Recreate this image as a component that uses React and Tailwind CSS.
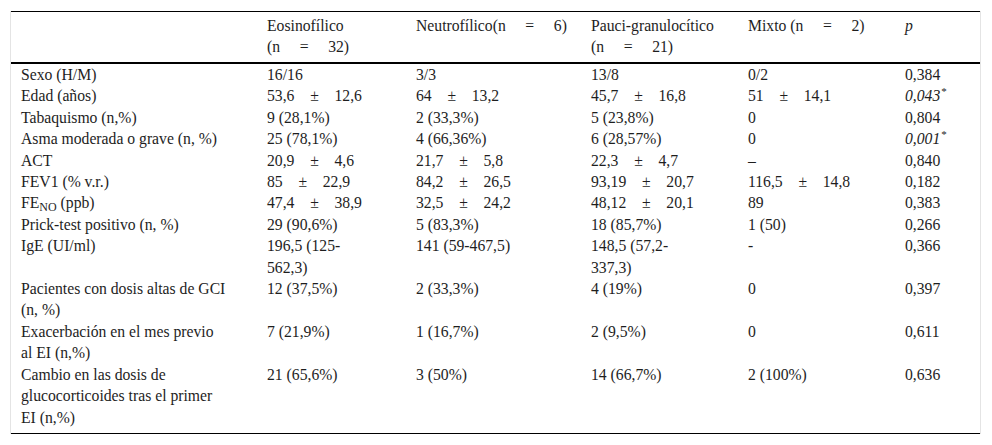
import React from "react";

const PM = ({ a, b }) => (
  <span>
    {a}
    {"\u00a0\u00a0\u00a0\u00a0±\u00a0\u00a0\u00a0\u00a0"}
    {b}
  </span>
);

const Star = ({ v }) => (
  <span>
    <i>{v}</i>
    <sup className="text-[11px] relative -top-[6px] ml-[1px]">*</sup>
  </span>
);

const rows = [
  ["Sexo (H/M)", "16/16", "3/3", "13/8", "0/2", "0,384"],
  [
    "Edad (años)",
    <PM a="53,6" b="12,6" />,
    <PM a="64" b="13,2" />,
    <PM a="45,7" b="16,8" />,
    <PM a="51" b="14,1" />,
    <Star v="0,043" />,
  ],
  ["Tabaquismo (n,%)", "9 (28,1%)", "2 (33,3%)", "5 (23,8%)", "0", "0,804"],
  ["Asma moderada o grave (n, %)", "25 (78,1%)", "4 (66,36%)", "6 (28,57%)", "0", <Star v="0,001" />],
  ["ACT", <PM a="20,9" b="4,6" />, <PM a="21,7" b="5,8" />, <PM a="22,3" b="4,7" />, "–", "0,840"],
  [
    "FEV1 (% v.r.)",
    <PM a="85" b="22,9" />,
    <PM a="84,2" b="26,5" />,
    <PM a="93,19" b="20,7" />,
    <PM a="116,5" b="14,8" />,
    "0,182",
  ],
  [
    <span>
      FE<sub className="text-[12px] relative top-[3px] align-baseline">NO</sub> (ppb)
    </span>,
    <PM a="47,4" b="38,9" />,
    <PM a="32,5" b="24,2" />,
    <PM a="48,12" b="20,1" />,
    "89",
    "0,383",
  ],
  ["Prick-test positivo (n, %)", "29 (90,6%)", "5 (83,3%)", "18 (85,7%)", "1 (50)", "0,266"],
  [
    "IgE (UI/ml)",
    <span>196,5 (125-<br />562,3)</span>,
    "141 (59-467,5)",
    <span>148,5 (57,2-<br />337,3)</span>,
    "-",
    "0,366",
  ],
  [<span>Pacientes con dosis altas de GCI<br />(n, %)</span>, "12 (37,5%)", "2 (33,3%)", "4 (19%)", "0", "0,397"],
  [<span>Exacerbación en el mes previo<br />al EI (n,%)</span>, "7 (21,9%)", "1 (16,7%)", "2 (9,5%)", "0", "0,611"],
  [
    <span>Cambio en las dosis de<br />glucocorticoides tras el primer<br />EI (n,%)</span>,
    "21 (65,6%)",
    "3 (50%)",
    "14 (66,7%)",
    "2 (100%)",
    "0,636",
  ],
];

export default function App() {
  return (
    <div className="bg-white w-[992px] h-[445px] pt-[11px] pl-[10px]" style={{ fontFamily: '"Liberation Serif", "Times New Roman", serif' }}>
      <div className="w-[971px] border-x border-[#e4e4e4]">
        <table className="w-full table-fixed border-collapse text-[15.7px] leading-[21.4px] text-[#1e1e1e]">
          <colgroup>
            <col className="w-[246px]" />
            <col className="w-[149px]" />
            <col className="w-[175px]" />
            <col className="w-[157px]" />
            <col className="w-[157px]" />
            <col />
          </colgroup>
          <thead>
            <tr className="border-t border-b-2 border-black align-top text-left">
              <th className="font-normal pl-[10px] pt-[3px] pb-[5px]"></th>
              <th className="font-normal pl-[10px] pt-[3px] pb-[5px] leading-[21px]">
                Eosinofílico
                <br />
                {"(n\u00a0\u00a0\u00a0\u00a0\u00a0=\u00a0\u00a0\u00a0\u00a0\u00a032)"}
              </th>
              <th className="font-normal pl-[10px] pt-[3px] pb-[5px] whitespace-nowrap">
                {"Neutrofílico(n\u00a0\u00a0\u00a0\u00a0\u00a0=\u00a0\u00a0\u00a0\u00a0\u00a06)"}
              </th>
              <th className="font-normal pl-[10px] pt-[3px] pb-[5px] leading-[21px]">
                Pauci-granulocítico
                <br />
                {"(n\u00a0\u00a0\u00a0\u00a0\u00a0=\u00a0\u00a0\u00a0\u00a0\u00a021)"}
              </th>
              <th className="font-normal pl-[10px] pt-[3px] pb-[5px] whitespace-nowrap">
                {"Mixto (n\u00a0\u00a0\u00a0\u00a0\u00a0=\u00a0\u00a0\u00a0\u00a0\u00a02)"}
              </th>
              <th className="font-normal pl-[10px] pt-[3px] pb-[5px]">
                <i>p</i>
              </th>
            </tr>
          </thead>
          <tbody className="border-b border-black">
            {rows.map((r, i) => (
              <tr key={i} className="align-top">
                {r.map((c, j) => (
                  <td
                    key={j}
                    className={`pl-[10px] ${i === rows.length - 1 ? "pb-[5px]" : ""} whitespace-nowrap`}
                  >
                    {c}
                  </td>
                ))}
              </tr>
            ))}
          </tbody>
        </table>
      </div>
    </div>
  );
}
